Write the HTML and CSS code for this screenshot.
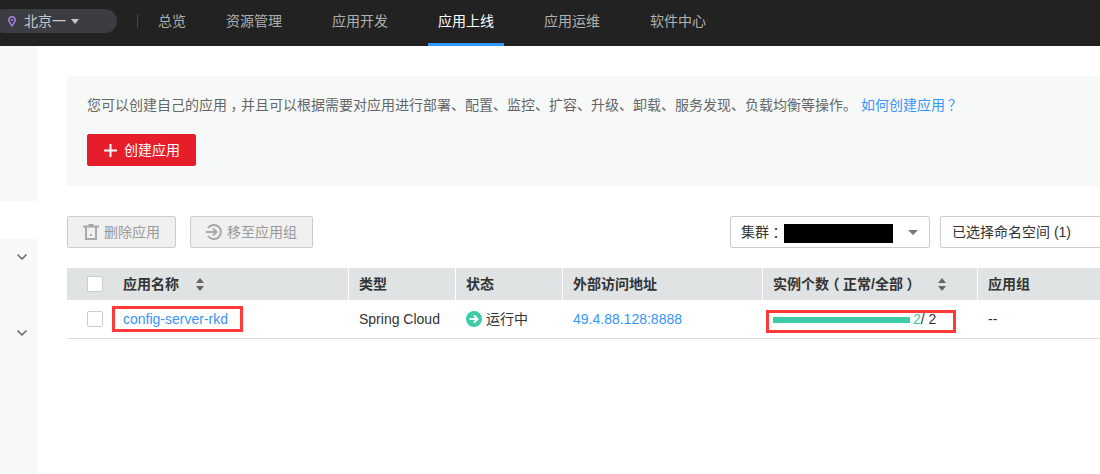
FILE: index.html
```html
<!DOCTYPE html>
<html lang="zh-CN">
<head>
<meta charset="utf-8">
<title>应用上线</title>
<link rel="stylesheet" href="styles.css">
</head>
<body>
<header class="topbar">
  <div class="region">
    <svg class="pin" width="8" height="11" viewBox="0 0 8 11"><path d="M4 .8C2 .8.8 2.300.8 4c0 2 1.700 3.800 3.200 5.800C5.500 7.800 7.200 6 7.200 4 7.200 2.300 6 .8 4 .8z" fill="none" stroke="#a585ea" stroke-width="1.500"/><circle cx="4" cy="4" r="1.100" fill="#a585ea"/></svg>
    <span>北京一</span>
    <i class="caret light"></i>
  </div>
  <i class="divider"></i>
  <nav class="nav">
    <a class="overview">总览</a>
    <a class="resource">资源管理</a>
    <a>应用开发</a>
    <a class="active">应用上线</a>
    <a>应用运维</a>
    <a>软件中心</a>
  </nav>
</header>
<div class="layout">
  <aside class="sidebar">
    <div class="side-top"></div>
    <div class="side-menu">
      <svg width="12" height="8" viewBox="0 0 12 8"><path d="M1.500 1.500 6 6l4.500-4.500" fill="none" stroke="#666" stroke-width="1.500"/></svg>
      <svg width="12" height="8" viewBox="0 0 12 8"><path d="M1.500 1.500 6 6l4.500-4.500" fill="none" stroke="#666" stroke-width="1.500"/></svg>
    </div>
  </aside>
  <main class="main">
    <section class="intro">
      <p>您可以创建自己的应用<span class="punct">，</span>并且可以根据需要对应用进行部署、配置、监控、扩容、升级、卸载、服务发现、负载均衡等操作。 <a class="link">如何创建应用<span class="question">？</span></a></p>
      <button class="btn primary"><svg width="13" height="13" viewBox="0 0 13 13"><path d="M6.500 0v13M0 6.500h13" stroke="#fff" stroke-width="2"/></svg>创建应用</button>
    </section>
    <div class="toolbar">
      <button class="btn disabled"><svg width="16" height="16" viewBox="0 0 16 16" fill="none" stroke="#a9a9a9" stroke-width="2"><path d="M0 2.500h16M5.500 1h5M3 2.500V15h10V2.500M8 10v2"/></svg>删除应用</button>
      <button class="btn disabled move"><svg width="16" height="16" viewBox="0 0 16 16" fill="none" stroke="#a9a9a9" stroke-width="2"><path d="M2.200 4a7 7 0 1 1 0 8M0 8h10M7 4.500 10.500 8 7 11.500"/></svg>移至应用组</button>
      <div class="filters">
        <div class="select cluster"><span>集群<span class="punct">：</span></span><i class="redacted"></i><i class="caret"></i></div>
        <div class="select namespace">已选择命名空间 (1)</div>
      </div>
    </div>
    <div class="table">
      <div class="row head">
        <div class="name"><i class="check"></i>应用名称<svg class="sort" width="8" height="13" viewBox="0 0 8 13"><path d="M4 0l4 5H0zM0 8h8l-4 5z" fill="#666"/></svg></div>
        <div>类型</div>
        <div>状态</div>
        <div>外部访问地址</div>
        <div class="count"><span>实例个数<span class="punct">（</span>正常/全部<span class="punct">）</span></span><svg class="sort" width="8" height="13" viewBox="0 0 8 13"><path d="M4 0l4 5H0zM0 8h8l-4 5z" fill="#666"/></svg></div>
        <div>应用组</div>
      </div>
      <div class="row item">
        <div class="name"><i class="check"></i><a class="link marked">config-server-rkd</a></div>
        <div>Spring Cloud</div>
        <div class="status"><svg width="16" height="16" viewBox="0 0 16 16"><circle cx="8" cy="8" r="8" fill="#3dcca6"/><path d="M3.500 8H11M8 4.500 11.500 8 8 11.500" fill="none" stroke="#fff" stroke-width="2"/></svg>运行中</div>
        <div><a class="link">49.4.88.128:8888</a></div>
        <div class="instances"><div class="meter marked"><i class="bar"></i><span><b>2</b>/ 2</span></div></div>
        <div>--</div>
      </div>
    </div>
  </main>
</div>
</body>
</html>
```

FILE: styles.css
```css
* { box-sizing: border-box; }
body {
  margin: 0;
  height: 474px;
  overflow: hidden;
  background: #fff;
  color: #333;
  font: 14px/20px "Liberation Sans", "Noto Sans CJK SC", sans-serif;
}
.topbar {
  display: flex;
  height: 46px;
  background: #222;
  color: #b0b0b0;
}
.region {
  display: flex;
  align-items: center;
  width: 125px;
  height: 24px;
  margin: 9px 0 0 -8px;
  padding-left: 16px;
  border-radius: 12px;
  background: #3c3d43;
  color: #c8c8c8;
}
.region span { margin: 0 5px 0 8px; }
.caret {
  border: 5px solid transparent;
  border-top-color: #777;
  border-bottom: 0;
}
.caret.light { border-width: 5px 4px 0; border-top-color: #c8c8c8; }
.divider {
  width: 1px;
  height: 14px;
  margin: 14px 5px 0 20px;
  background: #45464c;
}
.nav { display: flex; gap: 30px; }
.nav a {
  height: 46px;
  padding: 11px 10px 0;
  white-space: nowrap;
}
.nav .overview { padding-left: 15px; margin-right: -10px; }
.nav .resource { padding-left: 10px; }
.nav .active { color: #fff; border-bottom: 3px solid #3399ff; }
.layout { display: flex; height: 428px; }
.sidebar {
  display: flex;
  flex-direction: column;
  gap: 38px;
  width: 37px;
  flex: none;
}
.side-top { height: 155px; background: #f7f9f8; }
.side-menu {
  display: flex;
  flex: 1;
  flex-direction: column;
  gap: 68px;
  padding: 14px 0 0 16px;
  background: #f7f9f8;
}
.main { flex: 1; min-width: 0; padding: 30px 0 0 30px; }
.intro {
  height: 110px;
  padding: 19px 20px 0;
  background: #f7f9f8;
  color: #666;
}
.intro p { height: 20px; margin: 0 0 19px; white-space: nowrap; }
/* half-width punctuation centred in a full-width cell */
.punct {
  display: inline-block;
  width: 14px;
  text-align: center;
  font-feature-settings: "halt";
}
.question { font-family: "Noto Sans CJK TC", sans-serif; padding-left: 3px; line-height: 0; }
.link { color: #3795fa; }
.btn {
  display: flex;
  align-items: center;
  height: 32px;
  padding: 0 15px;
  border: 1px solid #ccc;
  border-radius: 2px;
  font: inherit;
  white-space: nowrap;
}
.btn.primary {
  gap: 7px;
  width: 109px;
  padding-left: 16px;
  border-color: #e61e2b;
  background: #e61e2b;
  color: #fff;
}
.btn.disabled {
  gap: 5px;
  width: 109px;
  background: #f0f0f0;
  color: #999;
}
.btn.move { width: 123px; margin-left: 14px; }
.toolbar { display: flex; margin-top: 30px; }
.filters { display: flex; gap: 10px; margin-left: auto; }
.select {
  display: flex;
  align-items: center;
  height: 32px;
  padding: 0 11px 0 10px;
  border: 1px solid #ccc;
  border-radius: 2px;
  white-space: nowrap;
}
.cluster { width: 200px; }
.namespace { width: 160px; padding-left: 11px; border-right: 0; border-radius: 2px 0 0 2px; }
.redacted { width: 109px; height: 19px; margin: 2px 0 0 1px; background: #000; }
.cluster .caret { margin-left: auto; }
.table { margin-top: 20px; }
.row {
  display: grid;
  grid-template-columns: 282px 107px 107px 200px 215px 1fr;
}
.row > div {
  display: flex;
  align-items: center;
  padding-left: 10px;
  white-space: nowrap;
}
.row > .name { padding-left: 20px; }
.head {
  height: 32px;
  background: #dfe3e3;
  font-weight: bold;
}
.head > div:not(:last-child) { border-right: 1px solid #fff; }
.item { height: 39px; border-bottom: 1px solid #ddd; }
.check {
  width: 16px;
  height: 16px;
  margin-right: 20px;
  border: 1px solid #ccc;
  border-radius: 2px;
  background: #fff;
}
.sort { margin-left: 17px; }
.count .sort { margin-left: 21px; }
.marked { outline: 3px solid #ff3838; outline-offset: 0; }
.name .marked {
  height: 20px;
  margin-left: -8px;
  padding: 0 12px 0 8px;
}
.status { gap: 4px; }
.row > .instances { padding-left: 6px; }
.meter {
  display: flex;
  align-items: center;
  width: 184px;
  height: 17px;
  margin-top: 4px;
  padding-left: 4px;
}
.bar { width: 137px; height: 6px; margin: -2px 3px 0 0; background: #3dcca6; }
.meter span { margin-top: -4px; }
.meter b { color: #3dcca6; font-weight: normal; }
```
